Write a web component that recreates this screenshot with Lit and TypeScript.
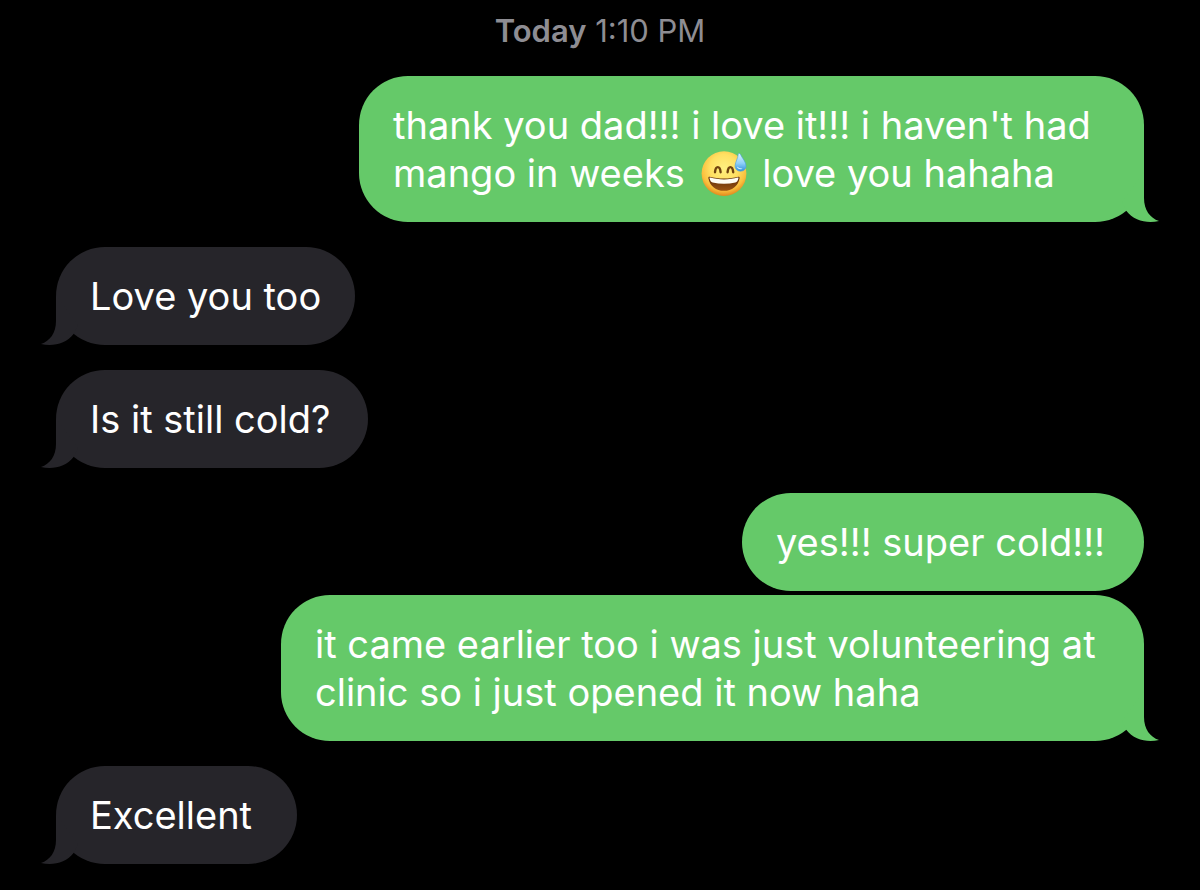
import { LitElement, html, css, svg, nothing } from "lit";
import { customElement, property } from "lit/decorators.js";
import { styleMap } from "lit/directives/style-map.js";

type Side = "sent" | "received";

interface Message {
  side: Side;
  lines: string[];
  tail: boolean;
  // Smallest width of the bubble, in pixels.
  measure?: number;
}

const SWEAT = "\u{1F605}";

const MESSAGES: Message[] = [
  {
    side: "sent",
    lines: ["thank you dad!!! i love it!!! i haven't had", `mango in weeks ${SWEAT} love you hahaha`],
    tail: true,
    measure: 785,
  },
  { side: "received", lines: ["Love you too"], tail: true },
  { side: "received", lines: ["Is it still cold?"], tail: true, measure: 312 },
  { side: "sent", lines: ["yes!!! super cold!!!"], tail: false, measure: 402 },
  {
    side: "sent",
    lines: ["it came earlier too i was just volunteering at", "clinic so i just opened it now haha"],
    tail: true,
    measure: 863,
  },
  { side: "received", lines: ["Excellent"], tail: true, measure: 241 },
];

@customElement("sweat-smile")
class SweatSmile extends LitElement {
  static styles = css`
    :host {
      display: inline-block;
      width: 46px;
      height: 46px;
      margin: 0 5px;
      vertical-align: -10px;
    }
    .face {
      display: block;
      width: 100%;
      height: 100%;
      overflow: visible;
    }
  `;

  render() {
    return html`<svg class="face" viewBox="0 0 46 46" role="img" aria-label="grinning face with sweat">
      ${svg`
        <defs>
          <radialGradient id="skin" cx="50%" cy="38%" r="62%">
            <stop offset="0" stop-color="#fff080" />
            <stop offset="0.5" stop-color="#ffe062" />
            <stop offset="0.8" stop-color="#fac03e" />
            <stop offset="1" stop-color="#e2881c" />
          </radialGradient>
          <linearGradient id="mouth" x1="0" y1="0" x2="0" y2="1">
            <stop offset="0" stop-color="#5c2c08" />
            <stop offset="1" stop-color="#9b5312" />
          </linearGradient>
          <linearGradient id="drop" x1="0" y1="0" x2="0" y2="1">
            <stop offset="0" stop-color="#d8f2ff" />
            <stop offset="0.55" stop-color="#8fd0f8" />
            <stop offset="1" stop-color="#2f8fdc" />
          </linearGradient>
        </defs>
        <circle cx="23" cy="22.6" r="22.4" fill="url(#skin)" />
        <path d="M14 21.2 C14.6 14.4 19 14.4 19.6 21.2" fill="none" stroke="#70430f" stroke-width="2.4" stroke-linecap="round" />
        <path d="M26.6 21.2 C27.2 14.4 31.6 14.4 32.2 21.2" fill="none" stroke="#70430f" stroke-width="2.4" stroke-linecap="round" />
        <path d="M8.6 25.8 C17 28.2 29 28.2 37.4 25.8 C38.2 25.6 38.8 26.2 38.6 27.2 C37 35.4 31 39.8 23 39.8 C15 39.8 9 35.4 7.4 27.2 C7.2 26.2 7.8 25.6 8.6 25.8 Z" fill="url(#mouth)" />
        <path d="M9.2 26.6 C17 29 29 29 36.8 26.6 C37.4 26.5 37.6 27 37.4 27.6 C36.8 30 36 31 34.4 31.4 C27 33.3 19 33.3 11.6 31.4 C10 31 9.2 30 8.6 27.6 C8.4 27 8.6 26.5 9.2 26.6 Z" fill="#fffdf4" />
        <path d="M37.7 2.6 C38.5 2.2 39.1 2.7 39.5 3.5 C41.4 7.4 45 11 45 15 C45 18.2 42.6 20.2 39.6 20.2 C36.2 20.2 33.9 18 34.1 14.6 C34.4 10.8 37 7.2 37.2 3.6 C37.2 3.1 37.3 2.8 37.7 2.6 Z" fill="url(#drop)" stroke="#4a9fdc" stroke-width="0.6" />
        <path d="M36 15.6 C36.2 18.2 39.6 19.2 41.6 17.4 C39.6 17.6 37.6 17 36 15.6 Z" fill="#d4f0ff" />
      `}
    </svg>`;
  }
}

@customElement("message-bubble")
class MessageBubble extends LitElement {
  @property({ attribute: false }) message!: Message;

  static styles = css`
    :host {
      display: block;
    }
    .bubble {
      position: relative;
      box-sizing: border-box;
      width: fit-content;
      padding: 25px 34px;
      border-radius: 49px;
      font-size: 38px;
      line-height: 48px;
      color: #ffffff;
    }
    .sent {
      margin-left: auto;
      background: #65c969;
      --tail: #65c969;
    }
    .received {
      background: #26252a;
      --tail: #26252a;
    }
    .text {
      margin: 0;
    }
    .line {
      display: block;
    }
    .tail {
      position: absolute;
      bottom: 0;
      width: 46px;
      height: 50px;
      fill: var(--tail);
    }
    .sent .tail {
      right: -16px;
    }
    .received .tail {
      left: -16px;
      transform: scaleX(-1);
    }
  `;

  private renderLine(line: string) {
    const parts = line.split(SWEAT);
    return html`<span class="line"
      >${parts.map((part, i) => (i > 0 ? html`<sweat-smile></sweat-smile>${part}` : part))}</span
    >`;
  }

  render() {
    const { side, lines, tail, measure } = this.message;
    const size = measure ? { minWidth: `min(100%, ${measure}px)` } : {};
    return html`<div class="bubble ${side}" style=${styleMap(size)}>
      ${tail
        ? html`<svg class="tail" viewBox="0 0 46 50" aria-hidden="true">
            <path d="M30 0 V26 C30 38 36 46 45 49 C33 51.5 20 49 12 38.5 L8 30 Z" />
          </svg>`
        : nothing}
      <p class="text">${lines.map((line) => this.renderLine(line))}</p>
    </div>`;
  }
}

@customElement("app-root")
class AppRoot extends LitElement {
  static styles = css`
    :host {
      display: block;
      box-sizing: border-box;
      min-height: 100vh;
      background: #000000;
      font-family: Inter, "Liberation Sans", sans-serif;
    }
    .thread {
      display: flex;
      flex-direction: column;
      padding: 11px 56px 26px;
    }
    .stamp {
      margin: 0 0 25px;
      font-size: 31px;
      line-height: 40px;
      text-align: center;
      color: #8e8d93;
    }
    .day {
      font-weight: 600;
    }
    .list {
      display: flex;
      flex-direction: column;
      margin: 0;
      padding: 0;
      list-style: none;
    }
    .item + .item {
      margin-top: 25px;
    }
    .item + .grouped {
      margin-top: 4px;
    }
  `;

  private isGrouped(index: number) {
    const previous = MESSAGES[index - 1];
    return previous !== undefined && previous.side === MESSAGES[index].side && !previous.tail;
  }

  render() {
    return html`<main class="thread">
      <p class="stamp"><span class="day">Today</span> <time datetime="13:10">1:10 PM</time></p>
      <ul class="list">
        ${MESSAGES.map(
          (message, i) => html`<li class="item ${this.isGrouped(i) ? "grouped" : ""}">
            <message-bubble .message=${message}></message-bubble>
          </li>`
        )}
      </ul>
    </main>`;
  }
}
